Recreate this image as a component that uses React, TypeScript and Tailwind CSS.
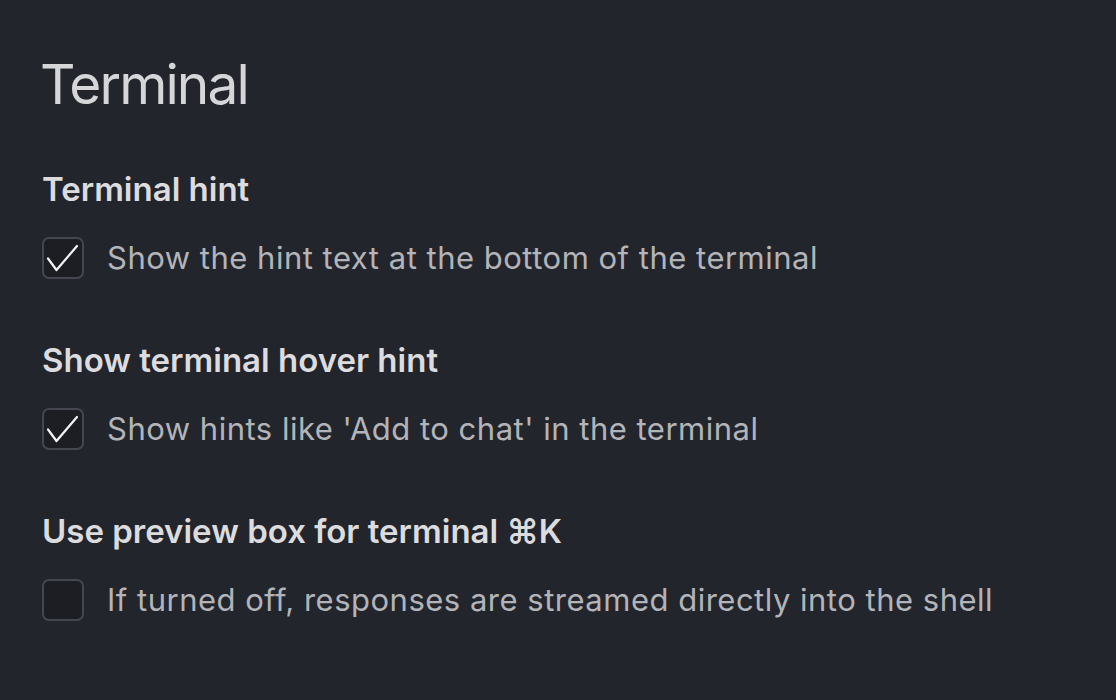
import React from "react";

type Setting = {
  title: string;
  description: string;
  checked: boolean;
};

const settings: Setting[] = [
  {
    title: "Terminal hint",
    description: "Show the hint text at the bottom of the terminal",
    checked: true,
  },
  {
    title: "Show terminal hover hint",
    description: "Show hints like 'Add to chat' in the terminal",
    checked: true,
  },
  {
    title: "Use preview box for terminal ⌘K",
    description: "If turned off, responses are streamed directly into the shell",
    checked: false,
  },
];

const Checkbox = ({ checked }: { checked: boolean }) => (
  <div className="flex size-[42px] shrink-0 items-center justify-center rounded-[7px] border-2 border-[#44474f] bg-[#1c1e24]">
    {checked && (
      <svg width="38" height="38" viewBox="0 0 38 38" fill="none">
        <path
          d="M4 19.5 L12.5 31 L33 7"
          stroke="#f4f4f5"
          strokeWidth="2.2"
          strokeLinecap="round"
          strokeLinejoin="round"
        />
      </svg>
    )}
  </div>
);

export default function App() {
  return (
    <div
      className="h-[700px] w-[1116px] bg-[#23252d] px-[42px] pt-[52px]"
      style={{ fontFamily: "Inter, 'Noto Sans', sans-serif" }}
    >
      <h1 className="-ml-[2px] text-[55px] leading-[64px] font-normal tracking-[-1.9px] text-[#d6d6d8]">
        Terminal
      </h1>
      <div className="mt-[53px] flex flex-col gap-[61px]">
        {settings.map((s) => (
          <div key={s.title} className="flex flex-col gap-[28px]">
            <h2 className="text-[33px] leading-[40px] font-semibold text-[#dcdcde]">
              {s.title}
            </h2>
            <label className="flex items-center gap-[23px]">
              <Checkbox checked={s.checked} />
              <span className="text-[31px] leading-[40px] tracking-[0.5px] text-[#b3b4b8]">
                {s.description}
              </span>
            </label>
          </div>
        ))}
      </div>
    </div>
  );
}
